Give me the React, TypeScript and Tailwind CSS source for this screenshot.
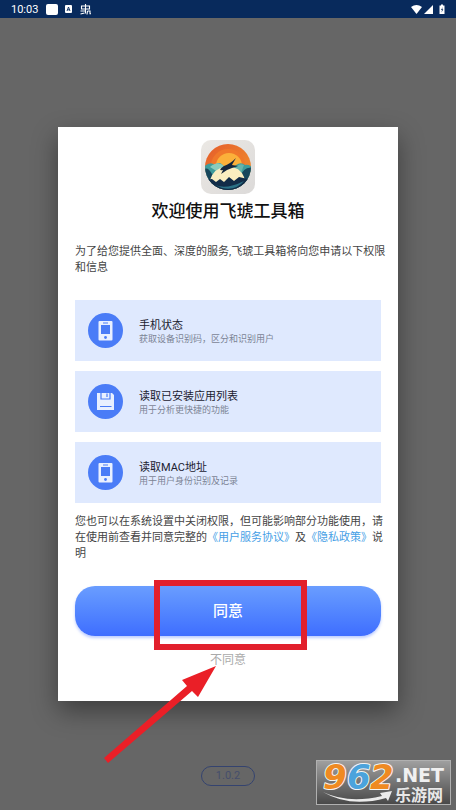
import React from 'react';

interface Permission {
  title: string;
  detail: string;
  icon: 'phone' | 'disk';
}

const permissions: Permission[] = [
  { title: '手机状态', detail: '获取设备识别码，区分和识别用户', icon: 'phone' },
  { title: '读取已安装应用列表', detail: '用于分析更快捷的功能', icon: 'disk' },
  { title: '读取MAC地址', detail: '用于用户身份识别及记录', icon: 'phone' },
];

const StatusBar: React.FC = () => (
  <header className="h-[18px] bg-[#082a5c] text-white flex items-center justify-between pl-[11px] pr-[10px]">
    <div className="flex items-center">
      <span className="text-[11px] leading-none">10:03</span>
      <span className="ml-2 w-3 h-[11px] rounded-xs bg-white" />
      <svg className="ml-[7px] w-[7px] h-2" viewBox="0 0 7 8">
        <rect width="7" height="8" rx="1" fill="#fff" />
        <path d="M2 6L3.5 2L5 6M2.5 4.8H4.5" stroke="#082a5c" strokeWidth="0.9" fill="none" />
      </svg>
      <svg className="ml-2 w-[11px] h-[11px]" viewBox="0 0 11 11" fill="none" stroke="#fff" strokeWidth="1.1">
        <path d="M1.5 2H9.5V5H1.5ZM5.5 0V9.500M0.500 7H5M0.500 10L4.500 9M7.500 7H10V9.800H11M7.500 7L7 10.500" />
      </svg>
    </div>
    <svg className="w-[35px] h-[11px]" viewBox="0 0 35 11" fill="#fff">
      <path d="M0 3Q5.5 -1 11 3L5.5 10Z" />
      <path d="M22 1V10H13Z" />
      <path d="M28.500 1.500H30V0.500H32V1.500H33.500V10H28.500Z" />
      <path d="M31.700 3L30 6H31L30.500 8.500L32.300 5.300H31.200Z" fill="#082a5c" />
    </svg>
  </header>
);

const AppLogo: React.FC = () => (
  <svg className="w-[54px] h-[54px]" viewBox="0 0 54 54" role="img" aria-label="飞琥工具箱">
    <defs>
      <linearGradient id="tile" x1="0" y1="0" x2="1" y2="1">
        <stop offset="0" stopColor="#ebe8e4" />
        <stop offset="1" stopColor="#dcdad9" />
      </linearGradient>
      <linearGradient id="sky" x1="0" y1="0" x2="1" y2="1">
        <stop offset="0" stopColor="#e4572a" />
        <stop offset="1" stopColor="#f39a2e" />
      </linearGradient>
      <clipPath id="disc">
        <circle cx="27" cy="27" r="23" />
      </clipPath>
    </defs>
    <rect width="54" height="54" rx="10" fill="url(#tile)" />
    <g clipPath="url(#disc)">
      <rect width="54" height="54" fill="url(#sky)" />
      <circle cx="27" cy="26" r="17" fill="#f0782a" />
      <circle cx="28" cy="26" r="13" fill="#fbb03a" />
      <path d="M0 30Q8 20 14 25Q19 20 24 28L30 30Q38 20 44 25Q49 24 54 30V54H0Z" fill="#3f9c9b" />
      <path d="M9 27Q17 20 23 26L17 32Z" fill="#8accbc" />
      <path d="M33 30Q38 22 43 25L40 33Z" fill="#68b4aa" />
      <path d="M0 32Q6 24 11 34L16 39L38 39Q42 25 54 28V54H0Z" fill="#17465b" />
      <path d="M9 40Q13 28 24 27Q38 25 43 37L44 41L14 43Z" fill="#fbeec0" />
      <path d="M3 40L11 39L15 42L19 39L23 42L28 37L33 41L38 37L51 40L44 52H10Z" fill="#122c48" />
      <path d="M14 45Q25 50 43 41Q35 51 21 48Z" fill="#2b7186" />
    </g>
    <path d="M35 18Q32 23 31 25L37 26L31 28L26 30L20 34L22 30Q16 31 23 26Q29 24 35 18Z" fill="#14263d" />
  </svg>
);

const PermissionIcon: React.FC<{ icon: Permission['icon'] }> = ({ icon }) => (
  <svg className="w-[35px] h-[35px] shrink-0" viewBox="0 0 35 35">
    <circle cx="17.500" cy="17.500" r="17.500" fill="#4a7cf7" />
    {icon === 'phone' ? (
      <>
        <rect x="10.500" y="8" width="14" height="19.500" rx="1" fill="#e9f0ff" />
        <rect x="13" y="12" width="9" height="9" fill="#4a7cf7" />
        <path d="M15 10H20" stroke="#4a7cf7" />
        <circle cx="17.500" cy="24.500" r="1.400" fill="#4a7cf7" />
      </>
    ) : (
      <>
        <path d="M9 9H24L26 11V26H9Z" fill="#e9f0ff" />
        <path d="M13 9V15H22V9" fill="none" stroke="#4a7cf7" strokeWidth="1.200" />
        <path d="M19 9.500V13M12 22.500H23.500" stroke="#4a7cf7" strokeWidth="1.200" />
      </>
    )}
  </svg>
);

const PermissionCard: React.FC<{ item: Permission }> = ({ item }) => (
  <li className="bg-[#dfe9fe] px-[13px] py-[13px] flex items-center gap-4">
    <PermissionIcon icon={item.icon} />
    <div className="pt-[3px]">
      <h2 className="text-[11px] leading-[14px] text-[#1b2130]">{item.title}</h2>
      <p className="text-[9px] leading-[13px] text-[#7c8495]">{item.detail}</p>
    </div>
  </li>
);

const Watermark: React.FC = () => (
  <svg className="absolute right-[5px] bottom-[5px] w-[135px] h-[45px] overflow-visible" viewBox="0 0 135 45">
    <defs>
      <linearGradient id="plate" x1="0" y1="0" x2="0" y2="1">
        <stop offset="0" stopColor="#a0a0a0" />
        <stop offset="1" stopColor="#484848" />
      </linearGradient>
    </defs>
    <rect x="0.500" y="0.500" width="134" height="44" fill="url(#plate)" stroke="#b0b0b0" />
    <g
      className="font-['DejaVu_Sans',sans-serif] font-bold italic text-[34px]"
      stroke="#f4f4f4"
      strokeWidth="2"
      strokeLinejoin="round"
      paintOrder="stroke"
    >
      <text x="7" y="29" fill="#ef8a22">9</text>
      <text x="31" y="29" fill="#4ba3dc">6</text>
      <text x="54" y="29" fill="#ef8a22">2</text>
    </g>
    <text x="79" y="22" className="font-['DejaVu_Sans',sans-serif] font-bold text-[19px]" fill="#f0f0f0">.NET</text>
    <text x="79" y="41" className="font-['Noto_Sans_CJK_SC',sans-serif] font-bold text-[16px]" fill="#e8e8e8">乐游网</text>
    <path d="M7 32Q32 44 66 36L64 33L76 31L72 41L70 38Q34 48 7 32Z" fill="#ececec" />
  </svg>
);

const App: React.FC = () => {
  return (
    <div className="relative min-h-screen flex flex-col bg-[#666666] font-['Roboto','Noto_Sans_CJK_SC',sans-serif]">
      <StatusBar />
      <main className="flex-1 flex flex-col pt-[109px]">
        <section
          role="dialog"
          aria-labelledby="welcome"
          className="relative mx-[58px] bg-white px-[17px] pt-[13px] pb-8 flex flex-col shadow-[0_10px_24px_rgba(0,0,0,0.4)]"
        >
          <div className="flex justify-center">
            <AppLogo />
          </div>
          <h1 id="welcome" className="mt-[5px] text-center text-[17px] leading-6 font-medium text-[#111111]">
            欢迎使用飞琥工具箱
          </h1>
          <p className="mt-[21px] -mr-2 text-[11px] leading-4 text-[#444444]">
            为了给您提供全面、深度的服务,飞琥工具箱将向您申请以下权限和信息
          </p>
          <ul className="mt-6 flex flex-col gap-[10px]">
            {permissions.map((item) => (
              <PermissionCard key={item.title} item={item} />
            ))}
          </ul>
          <p className="mt-[11px] -mr-2 text-[11px] leading-4 text-[#444444]">
            您也可以在系统设置中关闭权限，但可能影响部分功能使用，请在使用前查看并同意完整的
            <a href="#" className="text-[#46a0e6]">《用户服务协议》</a>及
            <a href="#" className="text-[#46a0e6]">《隐私政策》</a>说明
          </p>
          <div className="relative mt-6 flex">
            <button className="flex-1 h-[50px] rounded-[20px] bg-linear-to-b from-[#6a9dff] to-[#3f6dff] text-white text-[15px] font-medium shadow-[0_2px_3px_rgba(63,109,255,0.35)]">
              同意
            </button>
            <span className="absolute left-[79px] -top-[6px] w-[153px] h-[70px] border-6 border-[#e2202c] pointer-events-none" />
          </div>
          <button className="mt-[15px] self-center text-xs leading-[18px] text-[#aaaaaa]">不同意</button>
          <svg
            className="absolute left-[44px] -bottom-[63px] w-[116px] h-[100px] pointer-events-none"
            viewBox="0 0 116 100"
            fill="#ea1f27"
          >
            <path d="M114 2L96 33L90 27L6 99L2 94L85 22L80 16Z" />
          </svg>
        </section>
        <div className="mt-auto mb-6 self-center w-[54px] h-5 rounded-full border border-[#34436f] flex items-center justify-center text-[11px] text-[#454e6c]">
          1.0.2
        </div>
      </main>
      <Watermark />
    </div>
  );
};

export default App;
